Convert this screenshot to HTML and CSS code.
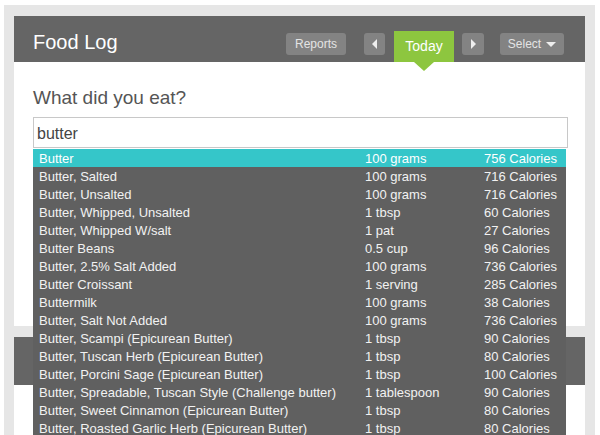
FILE: index.html
```html
<!DOCTYPE html>
<html lang="en">
<head>
    <meta charset="UTF-8">
    <title>Food Log</title>
    <link rel="stylesheet" href="styles.css">
</head>
<body>
    <div class="frame">
        <div class="panel">
            <div class="panel-head">
                <h1 class="title">Food Log</h1>
                <div class="nav">
                    <span class="btn btn-reports">Reports</span>
                    <span class="btn btn-arrow"><span class="tri tri-left"></span></span>
                    <span class="today">Today</span>
                    <span class="btn btn-arrow btn-next"><span class="tri tri-right"></span></span>
                    <span class="btn btn-select">Select <span class="tri tri-down"></span></span>
                </div>
            </div>
            <div class="panel-body">
                <h2 class="ask">What did you eat?</h2>
                <div class="search">
                    <input type="text" class="search-input" value="butter">
                    <ul class="results">
                        <li class="row active"><span>Butter</span><span>100 grams</span><span>756 Calories</span></li>
                        <li class="row"><span>Butter, Salted</span><span>100 grams</span><span>716 Calories</span></li>
                        <li class="row"><span>Butter, Unsalted</span><span>100 grams</span><span>716 Calories</span></li>
                        <li class="row"><span>Butter, Whipped, Unsalted</span><span>1 tbsp</span><span>60 Calories</span></li>
                        <li class="row"><span>Butter, Whipped W/salt</span><span>1 pat</span><span>27 Calories</span></li>
                        <li class="row"><span>Butter Beans</span><span>0.5 cup</span><span>96 Calories</span></li>
                        <li class="row"><span>Butter, 2.5% Salt Added</span><span>100 grams</span><span>736 Calories</span></li>
                        <li class="row"><span>Butter Croissant</span><span>1 serving</span><span>285 Calories</span></li>
                        <li class="row"><span>Buttermilk</span><span>100 grams</span><span>38 Calories</span></li>
                        <li class="row"><span>Butter, Salt Not Added</span><span>100 grams</span><span>736 Calories</span></li>
                        <li class="row"><span>Butter, Scampi (Epicurean Butter)</span><span>1 tbsp</span><span>90 Calories</span></li>
                        <li class="row"><span>Butter, Tuscan Herb (Epicurean Butter)</span><span>1 tbsp</span><span>80 Calories</span></li>
                        <li class="row"><span>Butter, Porcini Sage (Epicurean Butter)</span><span>1 tbsp</span><span>100 Calories</span></li>
                        <li class="row"><span>Butter, Spreadable, Tuscan Style (Challenge butter)</span><span>1 tablespoon</span><span>90 Calories</span></li>
                        <li class="row"><span>Butter, Sweet Cinnamon (Epicurean Butter)</span><span>1 tbsp</span><span>80 Calories</span></li>
                        <li class="row"><span>Butter, Roasted Garlic Herb (Epicurean Butter)</span><span>1 tbsp</span><span>80 Calories</span></li>
                    </ul>
                </div>
            </div>
        </div>
        <div class="panel panel-second">
            <div class="panel-head panel-head-tall"></div>
            <div class="panel-body"></div>
        </div>
    </div>
</body>
</html>
```

FILE: styles.css
```css
html, body {
    margin: 0;
    height: 100%;
    overflow: hidden;
}
body {
    background: #fff;
    font-family: "Liberation Sans", Arial, sans-serif;
}
.frame {
    box-sizing: border-box;
    margin: 5px 5px 0 4px;
    padding: 11px 10px 0 10px;
    background: #e6e6e6;
    height: calc(100% - 5px);
    overflow: hidden;
}
.panel {
    background: #fff;
}
.panel-head {
    display: flex;
    justify-content: space-between;
    height: 46px;
    background: #656565;
    padding: 0 21px 0 19px;
}
.panel-head-tall {
    height: 48px;
}
.title {
    margin: 0;
    padding-top: 14px;
    font-size: 20px;
    line-height: 24px;
    font-weight: normal;
    color: #fff;
}
.nav {
    display: flex;
    align-items: flex-start;
    padding-top: 15px;
}
.btn {
    display: flex;
    align-items: center;
    justify-content: center;
    margin-top: 2px;
    height: 22px;
    background: #838383;
    border-radius: 3px;
    color: #e4e4e4;
    font-size: 12px;
}
.btn-reports {
    width: 60px;
    margin-right: 18px;
}
.btn-arrow {
    width: 21px;
}
.btn-next {
    width: 22px;
    margin-right: 16px;
}
.btn-select {
    width: 64px;
    gap: 5px;
}
.today {
    position: relative;
    width: 60px;
    height: 31px;
    margin: 0 8px 0 9px;
    background: #8dc63f;
    color: #fff;
    font-size: 14px;
    line-height: 31px;
    text-align: center;
}
.today::after {
    content: "";
    position: absolute;
    left: 20px;
    bottom: -9px;
    border-left: 10px solid transparent;
    border-right: 10px solid transparent;
    border-top: 9px solid #8dc63f;
}
.tri {
    width: 0;
    height: 0;
}
.tri-left {
    border-top: 5px solid transparent;
    border-bottom: 5px solid transparent;
    border-right: 5px solid #eee;
}
.tri-right {
    border-top: 5px solid transparent;
    border-bottom: 5px solid transparent;
    border-left: 5px solid #eee;
}
.tri-down {
    border-left: 5px solid transparent;
    border-right: 5px solid transparent;
    border-top: 5px solid #eee;
}
.panel-body {
    padding: 0 16px 0 19px;
    height: 264px;
}
.ask {
    margin: 0;
    padding-top: 24px;
    font-size: 19px;
    line-height: 24px;
    font-weight: normal;
    color: #555;
}
.search {
    position: relative;
    margin-top: 7px;
}
.search-input {
    display: block;
    box-sizing: border-box;
    width: 535px;
    height: 31px;
    margin: 0;
    padding: 2px 3px 0 3px;
    border: 1px solid #c8c8c8;
    font-family: "Liberation Sans", Arial, sans-serif;
    font-size: 16px;
    color: #444;
    outline: none;
}
.results {
    position: absolute;
    top: 32px;
    left: 0;
    z-index: 2;
    width: 533px;
    margin: 0;
    padding: 0;
    list-style: none;
    background: #606060;
}
.row {
    display: grid;
    grid-template-columns: 326px 119px 1fr;
    box-sizing: border-box;
    height: 18px;
    padding: 1px 0 0 6px;
    font-size: 13px;
    line-height: 17px;
    color: #f2f2f2;
    white-space: nowrap;
}
.row.active {
    background: #35c6c9;
    color: #fff;
}
.panel-second {
    margin-top: 11px;
}
```
